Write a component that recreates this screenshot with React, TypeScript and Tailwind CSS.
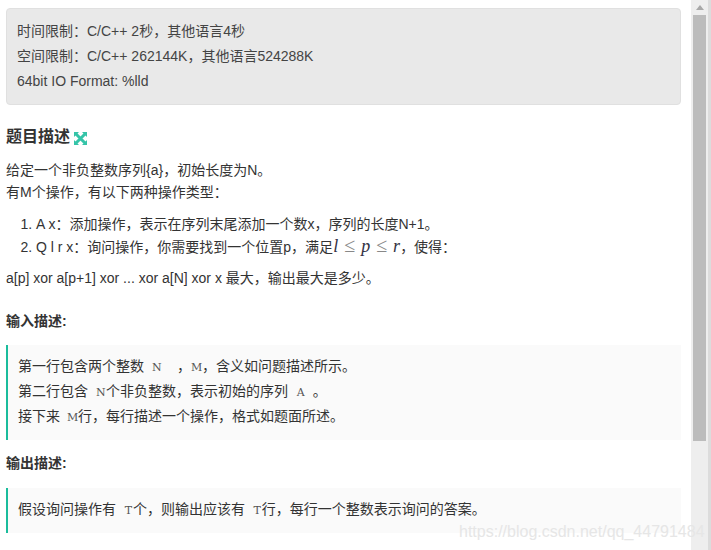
const CJK = "font-['Liberation_Sans','Noto_Sans_CJK_SC',sans-serif]";

function Var({ children, className = '' }: { children: React.ReactNode; className?: string }) {
  return (
    <span className={`inline-block text-center font-['DejaVu_Serif',serif] text-[11px] leading-none text-[#555] ${className}`}>
      {children}
    </span>
  );
}

function Quote({ children, className = '' }: { children: React.ReactNode; className?: string }) {
  return (
    <div className={`border-l-[2px] border-[#1abc9c] bg-[#fafafa] pl-[10px] pt-[9px] leading-[25px] text-[#333] ${className}`}>
      {children}
    </div>
  );
}

function ExpandIcon() {
  return (
    <svg width="13" height="13" viewBox="0 0 13 13" className="ml-[4px] mt-[2px]">
      <path d="M2 2 11 11M11 2 2 11" stroke="#35c4a8" strokeWidth="3" fill="none" />
      <g fill="#35c4a8">
        <path d="M0 0h5L0 5z" />
        <path d="M13 0v5L8 0z" />
        <path d="M0 13V8l5 5z" />
        <path d="M13 13H8l5-5z" />
      </g>
    </svg>
  );
}

function Leq() {
  return <span className="mx-[6px] text-[20px] not-italic text-[#888]">≤</span>;
}

export default function App() {
  return (
    <div className={`relative flex h-[550px] w-[711px] overflow-hidden bg-white text-[14px] text-[#333] ${CJK}`}>
      <main className="w-[691px] shrink-0 pl-[6px] pr-[10px] pt-[8px]">
        <div className="h-[97px] rounded-[4px] border border-[#e0e0e0] bg-[#e9e9e9] px-[10px] py-[10px] leading-[25px] text-[#444]">
          <p>时间限制：C/C++ 2秒，其他语言4秒</p>
          <p>空间限制：C/C++ 262144K，其他语言524288K</p>
          <p>64bit IO Format: %lld</p>
        </div>

        <h2 className="mt-[20px] flex h-[24px] items-center text-[16px] font-bold text-[#333]">
          题目描述
          <ExpandIcon />
        </h2>

        <div className="mt-[10px] leading-[22px]">
          <p>给定一个非负整数序列{'{a}'}，初始长度为N。</p>
          <p>有M个操作，有以下两种操作类型：</p>
        </div>

        <ol className="mt-[10px] list-decimal pl-[30px] leading-[22px]">
          <li>A x：添加操作，表示在序列末尾添加一个数x，序列的长度N+1。</li>
          <li className="h-[22px]">
            Q l r x：询问操作，你需要找到一个位置p，满足
            <span className="font-['Liberation_Serif',serif] text-[18px] leading-none italic text-[#334]">
              l<Leq />p<Leq />r
            </span>
            ，使得：
          </li>
        </ol>

        <p className="mt-[10px] leading-[22px]">a[p] xor a[p+1] xor ... xor a[N] xor x 最大，输出最大是多少。</p>

        <p className="mt-[21px] font-bold leading-[22px]">输入描述:</p>

        <Quote className="mt-[13px] h-[95px]">
          <p>第一行包含两个整数 <Var className="ml-[4px] mr-[15px] w-[10px]">N</Var>，<Var className="w-[11px]">M</Var>，含义如问题描述所示。</p>
          <p>第二行包含 <Var className="ml-[4px] w-[10px]">N</Var>个非负整数，表示初始的序列 <Var className="ml-[4px] mr-[7px] w-[10px]">A</Var>。</p>
          <p>接下来 <Var className="ml-[3px] w-[11px]">M</Var>行，每行描述一个操作，格式如题面所述。</p>
        </Quote>

        <p className="mt-[12px] font-bold leading-[22px]">输出描述:</p>

        <Quote className="mt-[14px] h-[45px]">
          <p>假设询问操作有 <Var className="ml-[4px] w-[9px]">T</Var>个，则输出应该有 <Var className="ml-[4px] w-[9px]">T</Var>行，每行一个整数表示询问的答案。</p>
        </Quote>
      </main>

      {/* scrollbar */}
      <div className="flex h-full w-[17px] shrink-0 flex-col items-center bg-[#eeeeee]">
        <div className="mt-[5px] h-0 w-0 border-x-[4px] border-b-[5px] border-x-transparent border-b-[#a8a8a8]" />
        <div className="mt-[5px] h-[426px] w-[13px] bg-[#bcbcbc]" />
      </div>
      <div className="h-full w-[3px] shrink-0 bg-[#dcdcdc]" />

      {/* watermark */}
      <span className="absolute left-[459px] top-[523px] font-['Liberation_Sans',sans-serif] text-[16px] leading-[18px] whitespace-nowrap text-[#e6e6e6]">
        https://blog.csdn.net/qq_44791484
      </span>
    </div>
  );
}
